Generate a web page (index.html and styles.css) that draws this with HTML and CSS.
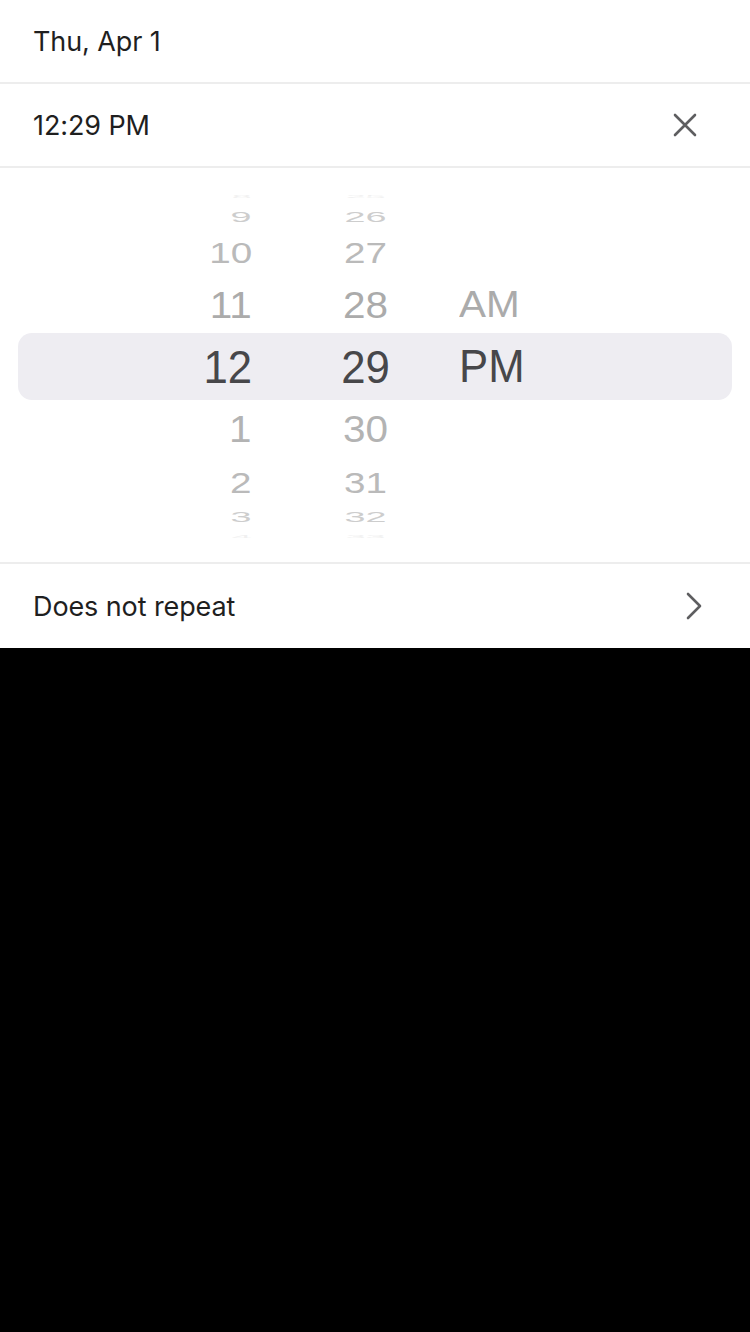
FILE: index.html
```html
<!DOCTYPE html>
<html>
<head>
<meta charset="utf-8">
<link rel="stylesheet" href="styles.css">
</head>
<body>
<div class="sheet">
  <div class="row">
    <span class="label">Thu, Apr 1</span>
  </div>
  <div class="row">
    <span class="label">12:29 PM</span>
    <svg class="icon-close" width="24" height="24" viewBox="0 0 24 24"><path d="M2 2 L22 22 M22 2 L2 22" stroke="#5e5e60" stroke-width="2.6" stroke-linecap="round" fill="none"/></svg>
  </div>
  <div class="picker">
    <div class="band"></div>
    <div class="wheel hours">
      <div class="slot s4">8</div>
      <div class="slot s3">9</div>
      <div class="slot s2">10</div>
      <div class="slot s1">11</div>
      <div class="slot s0">12</div>
      <div class="slot s1 b">1</div>
      <div class="slot s2 b">2</div>
      <div class="slot s3 b">3</div>
      <div class="slot s4 b">4</div>
    </div>
    <div class="wheel minutes">
      <div class="slot s4">25</div>
      <div class="slot s3">26</div>
      <div class="slot s2">27</div>
      <div class="slot s1">28</div>
      <div class="slot s0">29</div>
      <div class="slot s1 b">30</div>
      <div class="slot s2 b">31</div>
      <div class="slot s3 b">32</div>
      <div class="slot s4 b">33</div>
    </div>
    <div class="wheel ampm">
      <div class="slot s4"></div>
      <div class="slot s3"></div>
      <div class="slot s2"></div>
      <div class="slot s1">AM</div>
      <div class="slot s0">PM</div>
      <div class="slot s1 b"></div>
      <div class="slot s2 b"></div>
      <div class="slot s3 b"></div>
      <div class="slot s4 b"></div>
    </div>
  </div>
  <div class="row last">
    <span class="label">Does not repeat</span>
    <svg class="icon-chevron" width="18" height="30" viewBox="0 0 18 30"><path d="M3 3 L15 15 L3 27" stroke="#5e5e60" stroke-width="2.6" stroke-linecap="round" stroke-linejoin="round" fill="none"/></svg>
  </div>
</div>
</body>
</html>
```
FILE: styles.css
```css
* { box-sizing: border-box; }
html, body { margin: 0; padding: 0; background: #000; }
body { width: 750px; height: 1332px; }
.sheet { background: #fff; width: 750px; }
.row {
  height: 84px;
  display: flex;
  align-items: center;
  justify-content: space-between;
  padding: 0 0 0 33px;
  border-bottom: 2px solid #ededed;
}
.row.last { border-bottom: none; }
.label {
  font-family: Inter, "Liberation Sans", sans-serif;
  font-size: 27px;
  color: #1f1f1f;
  letter-spacing: -0.1px;
}
.icon-close { margin-right: 53px; }
.icon-chevron { margin-right: 47px; }
.picker {
  position: relative;
  height: 396px;
  padding: 22px 18px 20px 18px;
  display: flex;
  border-bottom: 2px solid #ededed;
  font-family: "Liberation Sans", Arial, sans-serif;
}
.band {
  position: absolute;
  left: 18px;
  right: 18px;
  top: 165px;
  height: 67px;
  background: #eeedf2;
  border-radius: 14px;
}
.wheel { position: relative; display: flex; flex-direction: column; }
.hours { width: 234px; align-items: flex-end; }
.minutes { width: 186px; margin-left: 21px; align-items: center; }
.ampm { flex: 1; align-items: flex-start; }
.slot {
  font-size: 46px;
  white-space: nowrap;
  display: flex;
  align-items: center;
}
.hours .slot { transform-origin: right center; }
.minutes .slot { transform-origin: center center; }
.ampm .slot { transform-origin: left center; }
.s4 { height: 14px; line-height: 14px; color: #f0f0f0; transform: scale(0.78, 0.08); }
.s3 { height: 26px; line-height: 26px; color: #cdcdcd; transform: scale(0.82, 0.32); }
.s2 { height: 44px; line-height: 44px; color: #bababa; transform: scale(0.84, 0.66); }
.s1 { height: 62px; line-height: 62px; color: #ababab; transform: scale(0.88, 0.82); }
.s0 { height: 62px; line-height: 62px; color: #47474a; transform: scale(0.95, 1); }
.s2.b { height: 45px; line-height: 45px; }
.s3.b { height: 25px; line-height: 25px; }
.s1.b { color: #b3b3b3; }
```
